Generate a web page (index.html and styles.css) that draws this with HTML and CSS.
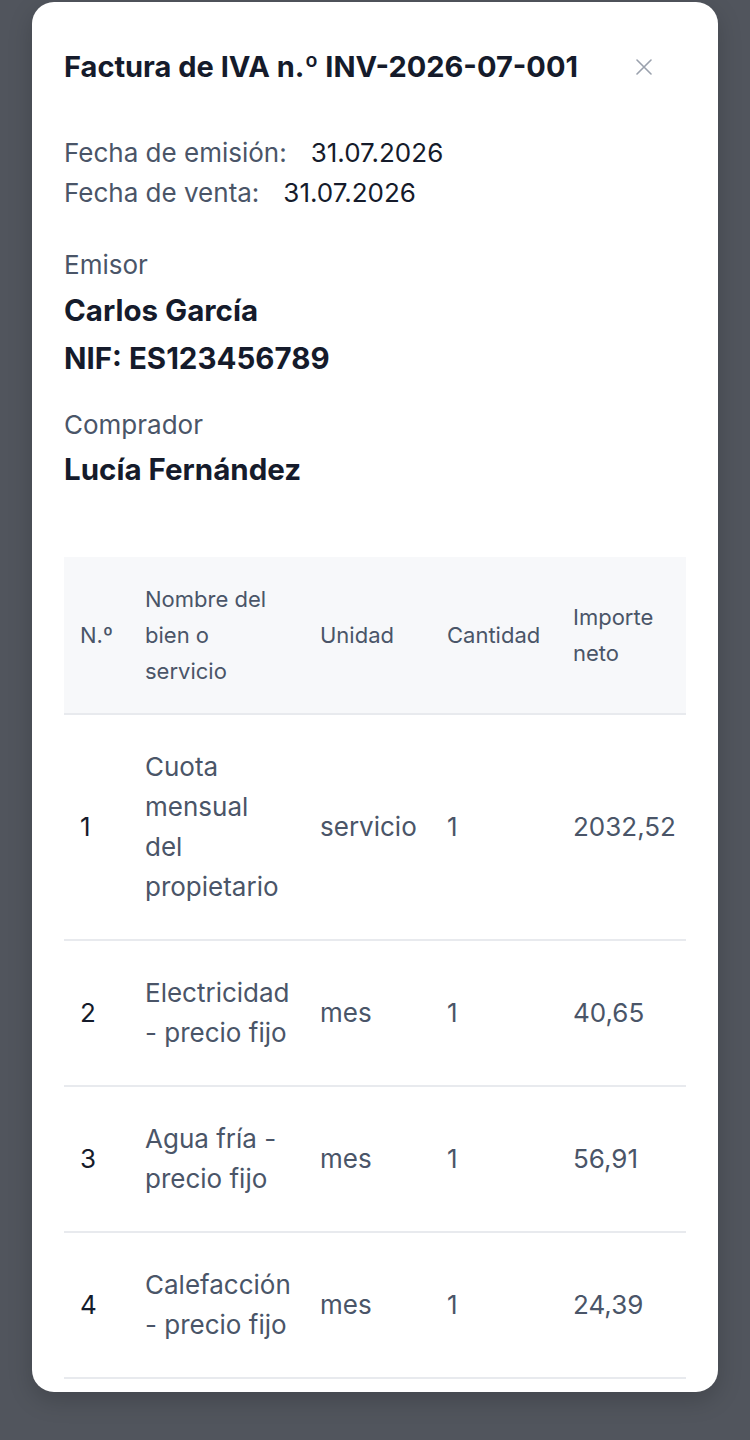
FILE: index.html
```html
<!DOCTYPE html>
<html lang="es">
<head>
<meta charset="utf-8">
<title>Factura de IVA</title>
<link rel="stylesheet" href="styles.css">
</head>
<body>
<div class="modal">
  <div class="modal-header">
    <h1 class="title">Factura de IVA n.º INV-2026-07-001</h1>
    <button class="close" aria-label="Cerrar">
      <svg width="16" height="16" viewBox="0 0 16 16" fill="none" stroke="#9aa1ad" stroke-width="1.6" stroke-linecap="round"><path d="M1 1L15 15M15 1L1 15"/></svg>
    </button>
  </div>

  <div class="dates">
    <div class="date-row"><span class="label">Fecha de emisión:</span><span class="value">31.07.2026</span></div>
    <div class="date-row"><span class="label">Fecha de venta:</span><span class="value">31.07.2026</span></div>
  </div>

  <div class="party party-issuer">
    <div class="label">Emisor</div>
    <div class="name">Carlos García</div>
    <div class="name">NIF: ES123456789</div>
  </div>

  <div class="party party-buyer">
    <div class="label">Comprador</div>
    <div class="name">Lucía Fernández</div>
  </div>

  <table class="items">
    <colgroup>
      <col class="c-no"><col class="c-name"><col class="c-unit"><col class="c-qty"><col class="c-net">
    </colgroup>
    <thead>
      <tr>
        <th>N.º</th>
        <th>Nombre del bien o servicio</th>
        <th>Unidad</th>
        <th>Cantidad</th>
        <th>Importe neto</th>
      </tr>
    </thead>
    <tbody>
      <tr><td class="num">1</td><td>Cuota mensual del propietario</td><td>servicio</td><td>1</td><td>2032,52</td></tr>
      <tr><td class="num">2</td><td>Electricidad - precio fijo</td><td>mes</td><td>1</td><td>40,65</td></tr>
      <tr><td class="num">3</td><td>Agua fría - precio fijo</td><td>mes</td><td>1</td><td>56,91</td></tr>
      <tr><td class="num">4</td><td>Calefacción - precio fijo</td><td>mes</td><td>1</td><td>24,39</td></tr>
    </tbody>
  </table>
</div>
</body>
</html>
```

FILE: styles.css
```css
* { box-sizing: border-box; }

html, body {
  margin: 0;
  padding: 0;
}

body {
  background: #51555d;
  height: 1440px;
  overflow: hidden;
  font-family: "Inter", "Noto Sans", sans-serif;
  color: #4a5568;
}

.modal {
  margin: 2px 32px 0;
  width: 686px;
  height: 1390px;
  background: #ffffff;
  border-radius: 22px;
  padding: 0 32px;
  overflow: hidden;
  box-shadow: 0 8px 24px rgba(0, 0, 0, 0.18);
}

.modal-header {
  display: flex;
  align-items: center;
  justify-content: space-between;
  padding-top: 45px;
}

.title {
  margin: 0;
  font-size: 29px;
  line-height: 36px;
  font-weight: 700;
  color: #151b2b;
  white-space: nowrap;
}

.close {
  width: 40px;
  height: 40px;
  margin-right: 22px;
  padding: 0;
  border: 0;
  background: none;
  display: flex;
  align-items: center;
  justify-content: center;
}

.dates {
  margin-top: 46px;
  font-size: 26px;
  line-height: 40px;
}

.date-row .label {
  color: #4a5568;
}

.date-row .value {
  margin-left: 24px;
  color: #151b2b;
}

.party {
  font-size: 26px;
  line-height: 40px;
}

.party-issuer { margin-top: 32px; }
.party-buyer { margin-top: 23px; }

.party .label {
  color: #4a5568;
}

.party .name {
  font-size: 29.5px;
  line-height: 48px;
  font-weight: 700;
  color: #151b2b;
}

.party-issuer .label + .name { margin-top: 1px; }

.items {
  margin-top: 64px;
  width: 622px;
  border-collapse: collapse;
  table-layout: fixed;
}

.c-no { width: 65px; }
.c-name { width: 175px; }
.c-unit { width: 127px; }
.c-qty { width: 126px; }
.c-net { width: 129px; }

.items th {
  background: #f7f8fa;
  text-align: left;
  font-weight: 400;
  font-size: 22px;
  line-height: 36px;
  color: #4a5568;
  padding: 24px 16px;
  vertical-align: middle;
  border-bottom: 2px solid #e8eaee;
}

.items td {
  font-size: 26px;
  line-height: 40px;
  color: #4a5568;
  padding: 32px 16px;
  vertical-align: middle;
  border-bottom: 2px solid #e8eaee;
}

.items td.num {
  color: #151b2b;
}
```
